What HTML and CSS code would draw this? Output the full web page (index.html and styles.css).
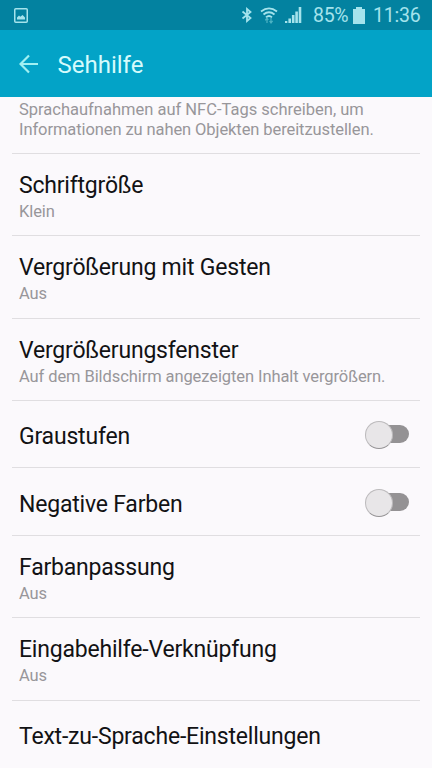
FILE: index.html
```html
<!DOCTYPE html>
<html lang="de">
<head>
<meta charset="utf-8">
<meta name="viewport" content="width=device-width">
<title>Sehhilfe</title>
<link rel="stylesheet" href="styles.css">
</head>
<body>
<div class="status">
  <svg class="picture" width="14" height="15" viewBox="0 0 14 15"><rect x=".75" y=".75" width="12.5" height="13.5" rx="1" fill="none" stroke="currentColor" stroke-width="1.5"/><path d="M3 11.500V9.500L5 7.500 6.300 8.800 8.600 7 11 9.500V11.500z" fill="currentColor"/></svg>
  <div class="indicators">
    <svg class="bluetooth" width="12" height="16" viewBox="0 0 12 16"><path d="M1.500 4.500 9.500 11 6 14V2L9.500 5 1.500 11.500" fill="none" stroke="currentColor" stroke-width="1.8"/></svg>
    <svg class="wifi" width="18" height="17" viewBox="0 0 18 17"><g fill="none" stroke="currentColor" stroke-width="1.8"><path d="M1 4.500Q9-1.800 17 4.500M3.500 7.500Q9 3 14.500 7.500M6 10.300Q9 7.600 12 10.300"/></g><path d="M7 11v5M5.300 13.300 7 11l1.300 2M11 11v5M9.600 14 11 16l1.600-2.200" fill="none" stroke="#4db3c4" stroke-width="1.200"/></svg>
    <svg class="signal" width="17" height="16" viewBox="0 0 17 16"><path d="M0 14h2.300v2H0zM3.400 11.500h2.600V16H3.400zM6.900 8h2.600v8H6.900zM10.300 4.500h2.600V16h-2.600zM13.700 0h2.600v16h-2.600z" fill="currentColor"/></svg>
    <span class="percent">85%</span>
    <svg class="battery" width="12" height="17" viewBox="0 0 12 17"><path d="M3 0h6v2h3v15H0V2h3z" fill="currentColor"/></svg>
    <span class="clock">11:36</span>
  </div>
</div>
<header class="bar">
  <svg class="back" width="20" height="20" viewBox="0 0 20 20"><path d="M19 10H1.600M10 1.500 1.500 10 10 18.500" fill="none" stroke="currentColor" stroke-width="2.200"/></svg>
  <h1>Sehhilfe</h1>
</header>
<main class="list">
  <div class="row intro"><p class="sub"><span class="lead">Sprachaufnahmen auf NFC-Tags schreiben, um</span><br>Informationen zu nahen Objekten bereitzustellen.</p></div>
  <div class="row"><h2>Schriftgröße</h2><p class="sub">Klein</p></div>
  <div class="row"><h2>Vergrößerung mit Gesten</h2><p class="sub">Aus</p></div>
  <div class="row"><h2>Vergrößerungsfenster</h2><p class="sub">Auf dem Bildschirm angezeigten Inhalt vergrößern.</p></div>
  <div class="row single"><h2>Graustufen</h2><span class="switch"></span></div>
  <div class="row single"><h2>Negative Farben</h2><span class="switch"></span></div>
  <div class="row"><h2>Farbanpassung</h2><p class="sub">Aus</p></div>
  <div class="row"><h2>Eingabehilfe-Verknüpfung</h2><p class="sub">Aus</p></div>
  <div class="row single last"><h2>Text-zu-Sprache-Einstellungen</h2></div>
</main>
</body>
</html>
```
FILE: styles.css
```css
* { box-sizing: border-box; }
body {
  margin: 0;
  width: 432px;
  height: 768px;
  overflow: hidden;
  background: #fbf9fc;
  font-family: Roboto, "Liberation Sans", sans-serif;
}
h1, h2, p { margin: 0; font-weight: 400; white-space: nowrap; }
.status {
  height: 30px;
  padding: 0 13px 0 14px;
  display: flex;
  align-items: center;
  justify-content: space-between;
  background: #0382a0;
  color: #a5e3ec;
}
.indicators { display: flex; align-items: center; font-size: 19.5px; line-height: 30px; }
.wifi { margin-left: 7px; }
.signal { margin-left: 7px; }
.percent { margin-left: 11px; width: 35px; letter-spacing: -0.3px; }
.battery { margin-left: 5px; }
.clock { margin-left: 8px; width: 46px; letter-spacing: -0.2px; }
.percent, .clock { padding-top: 2px; }
.bar {
  height: 67px;
  padding: 0 19px;
  display: flex;
  align-items: center;
  background: #03a3c7;
  color: #d6fbfc;
}
.bar h1 { margin-left: 18.5px; font-size: 24px; line-height: 30px; padding-top: 2px; }
.back { color: #a0f0f2; }
.list { padding: 0 12px; }
.row {
  height: 82.2px;
  padding: 18px 7px 0;
  border-bottom: 1px solid #e0dee1;
}
.row h2 { font-size: 23px; line-height: 27px; letter-spacing: -0.2px; color: #121214; }
.sub { font-size: 16.5px; line-height: 20px; letter-spacing: -0.09px; color: #98969a; padding-top: 3px; }
.lead { letter-spacing: 0; }
.intro { height: 57.200px; padding-top: 0; }
.single {
  height: 67.700px;
  padding-top: 5px;
  padding-right: 11px;
  display: flex;
  align-items: center;
  justify-content: space-between;
}
.last { border-bottom: 0; }
.switch {
  position: relative;
  width: 38px;
  height: 18px;
  margin-bottom: 5px;
  border-radius: 9px;
  background: #949294;
}
.switch::before {
  content: "";
  position: absolute;
  left: -6px;
  top: -4px;
  width: 26px;
  height: 26px;
  border-radius: 50%;
  background: #e8e6e8;
  border: 1px solid #bcbabc;
  border-bottom-color: #959395;
}
```
